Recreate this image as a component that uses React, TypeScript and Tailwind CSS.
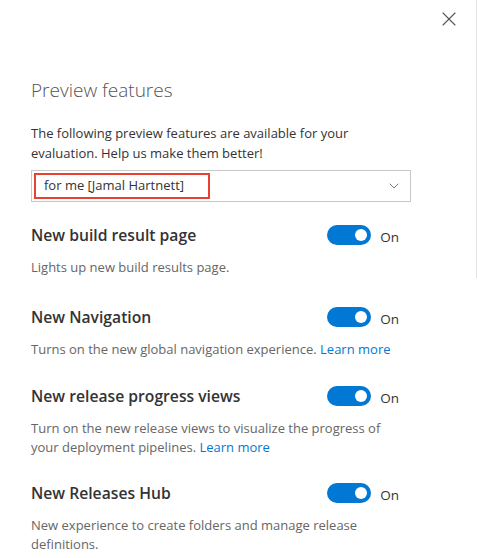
import { X, ChevronDown } from 'lucide-react';

type Feature = {
  title: string;
  desc: string;
  link?: boolean;
  gap: string;
};

const features: Feature[] = [
  { title: 'New build result page', desc: 'Lights up new build results page.', gap: 'mt-[22px]' },
  { title: 'New Navigation', desc: 'Turns on the new global navigation experience.', link: true, gap: 'mt-[29px]' },
  {
    title: 'New release progress views',
    desc: 'Turn on the new release views to visualize the progress of your deployment pipelines.',
    link: true,
    gap: 'mt-[26px]',
  },
  {
    title: 'New Releases Hub',
    desc: 'New experience to create folders and manage release definitions.',
    gap: 'mt-[25px]',
  },
];

const Toggle = () => (
  <div className="flex items-center gap-[9px]">
    <div className="w-[44px] h-[20px] rounded-full bg-[#0078d4] flex items-center justify-end pr-[4px]">
      <div className="w-[12px] h-[12px] rounded-full bg-white" />
    </div>
    <span className="pt-[3px] text-[13.5px] leading-[16px] text-[#333]">On</span>
  </div>
);

const App = () => {
  return (
    <div
      className="w-[477px] h-[558px] bg-white flex overflow-hidden"
      style={{ fontFamily: '"Open Sans", "Noto Sans", sans-serif' }}
    >
      <main className="flex-1 flex flex-col pl-[31px] pr-[65px]">
        <div className="flex justify-end pt-[7px] -mr-[50px]">
          <X className="w-[24px] h-[24px] text-[#555]" strokeWidth={1.1} />
        </div>
        <h1 className="mt-[45px] text-[19px] font-light text-[#555] leading-[28px]">Preview features</h1>
        <p className="mt-[19px] text-[13px] leading-[20px] text-[#333]">
          The following preview features are available for your evaluation. Help us make them better!
        </p>
        <div className="mt-[7px] h-[32px] border border-[#c8c8c8] flex items-center pl-[2px] pr-[8px]">
          <div className="h-[26px] w-[176px] border-2 border-[#e8412f] flex items-center pl-[8px] text-[13px] text-[#333]">
            for me [Jamal Hartnett]
          </div>
          <ChevronDown className="ml-auto w-[16px] h-[16px] text-[#666]" strokeWidth={1.3} />
        </div>
        {features.map((f) => (
          <section key={f.title} className={f.gap}>
            <div className="h-[22px] flex items-center justify-between pr-[12px]">
              <h2 className="text-[15.7px] font-semibold text-[#333] leading-[22px]">{f.title}</h2>
              <Toggle />
            </div>
            <p className="mt-[12px] text-[13px] leading-[19px] text-[#666]">
              {f.desc}
              {f.link && (
                <>
                  {' '}
                  <span className="text-[#0078d4]">Learn more</span>
                </>
              )}
            </p>
          </section>
        ))}
      </main>
      <aside className="w-[1px]">
        <div className="h-[278px] bg-[#e3e3e3]" />
      </aside>
    </div>
  );
};

export default App;
